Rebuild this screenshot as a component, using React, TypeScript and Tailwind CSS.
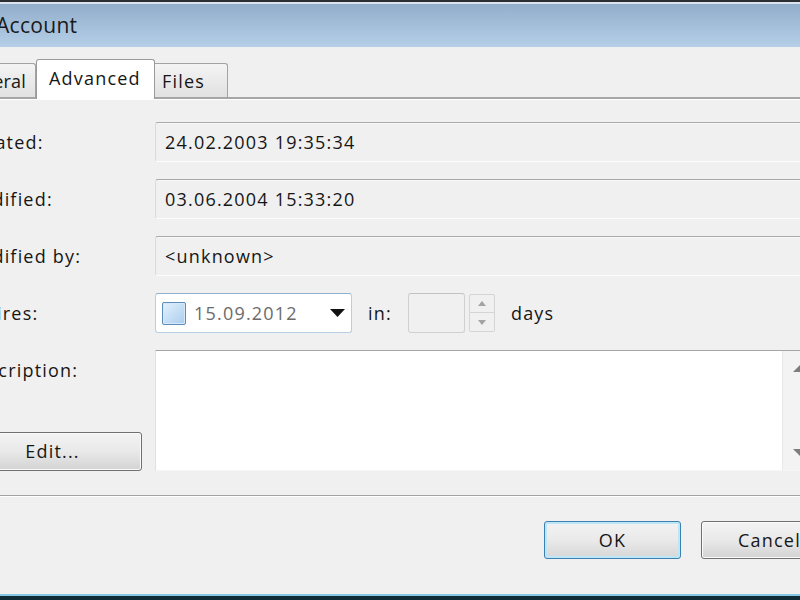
import React from "react";

function Label({ children }: { children: React.ReactNode }) {
  return <div className="w-[192px] shrink-0 h-[40px] flex items-center">{children}</div>;
}

function ReadOnly({ value }: { value: string }) {
  return (
    <div className="flex-1 h-[40px] rounded-[3px] border border-[#dadada] border-t-[#a9a9a9] border-b-[#fcfcfc] bg-[#f0f0f0] shadow-[inset_0_1px_0_#f8f8f8] flex items-center pl-[9px]">
      {value}
    </div>
  );
}

function Row({ label, children }: { label: string; children: React.ReactNode }) {
  return (
    <div className="flex h-[40px] items-center">
      <Label>{label}</Label>
      {children}
    </div>
  );
}

export default function App() {
  return (
    <div className="w-[800px] h-[600px] overflow-hidden bg-[#f0f0f0] flex flex-col font-['Open_Sans',sans-serif] text-[18px] tracking-[1.2px] text-[#161616]">
      {/* window top edge */}
      <div className="h-[2px] shrink-0 bg-[#2c3034]" />
      <div className="h-[2px] shrink-0 bg-[#dbe5ef]" />
      {/* title bar */}
      <div className="h-[43px] shrink-0 bg-gradient-to-b from-[#93aecb] to-[#b5cfe8] flex items-center">
        <span className="ml-[-4px] text-[21px] tracking-[0.3px] text-[#1a1a1a] leading-none">Account</span>
      </div>

      {/* tab strip */}
      <div className="h-[52px] shrink-0 flex items-end">
        <div className="ml-[-60px] w-[96px] h-[36px] shrink-0 border border-b-2 border-[#a3a3a3] border-b-[#a6a6a6] rounded-t-[3px] bg-gradient-to-b from-[#f4f4f4] to-[#e1e1e1] flex items-center justify-end pr-[9px] pt-[1px] tracking-[0.2px]">
          General
        </div>
        <div className="w-[119px] h-[40px] shrink-0 border border-b-0 border-[#9a9a9a] rounded-t-[3px] bg-white flex items-center pl-[12px] pb-[3px]">
          Advanced
        </div>
        <div className="w-[73px] h-[36px] shrink-0 border border-l-0 border-b-2 border-[#a3a3a3] border-b-[#a6a6a6] rounded-tr-[3px] bg-gradient-to-b from-[#f4f4f4] to-[#e1e1e1] flex items-center pl-[7px] pt-[1px]">
          Files
        </div>
        <div className="flex-1 border-b-2 border-[#a6a6a6]" />
      </div>

      {/* content */}
      <div className="shrink-0 border-t border-white ml-[-37px] mr-[-20px] pt-[22px] flex flex-col gap-[17px]">
        <Row label="Created:">
          <ReadOnly value="24.02.2003 19:35:34" />
        </Row>
        <Row label="Modified:">
          <ReadOnly value="03.06.2004 15:33:20" />
        </Row>
        <Row label="Modified by:">
          <ReadOnly value="<unknown>" />
        </Row>
        <Row label="Expires:">
          <div className="w-[197px] h-[40px] shrink-0 rounded-[3px] border border-[#b8cfe3] border-t-[#8fb0cf] bg-white flex items-center pl-[6px]">
            <div className="w-[24px] h-[23px] shrink-0 border border-[#5d8cbb] rounded-[2px] bg-gradient-to-br from-[#e4f1fc] to-[#a9cdee] shadow-[inset_0_0_0_1px_#d6e9fa]" />
            <span className="ml-[8px] text-[#6b6b6b]">15.09.2012</span>
            <svg className="ml-auto mr-[6px]" width="15" height="8" viewBox="0 0 15 8">
              <path d="M0 0 L15 0 L7.5 8 Z" fill="#111" />
            </svg>
          </div>
          <span className="ml-[16px]">in:</span>
          <div className="ml-[16px] w-[57px] h-[40px] shrink-0 rounded-[3px] border border-[#d0d0d0] border-t-[#c2c2c2] bg-[#f0f0f0]" />
          <div className="ml-[4px] w-[26px] h-[38px] shrink-0 flex flex-col">
            <div className="h-[19px] border border-[#d4d4d4] rounded-t-[2px] bg-[#f0f0f0] flex items-center justify-center">
              <svg width="8" height="5" viewBox="0 0 8 5">
                <path d="M0 5 L8 5 L4 0 Z" fill="#a3a3a3" />
              </svg>
            </div>
            <div className="h-[19px] border border-t-0 border-[#d4d4d4] rounded-b-[2px] bg-[#f0f0f0] flex items-center justify-center">
              <svg width="8" height="5" viewBox="0 0 8 5">
                <path d="M0 0 L8 0 L4 5 Z" fill="#a3a3a3" />
              </svg>
            </div>
          </div>
          <span className="ml-[16px]">days</span>
        </Row>
        <div className="flex h-[121px]">
          <div className="w-[192px] shrink-0 flex flex-col justify-between">
            <Label>Description:</Label>
            <div className="w-[179px] h-[39px] rounded-[3px] border border-[#707070] bg-gradient-to-b from-[#f3f3f3] via-[#e9e9e9] to-[#d3d3d3] shadow-[inset_0_0_0_1px_#fbfbfb] flex items-center justify-center">
              Edit...
            </div>
          </div>
          <div className="flex-1 flex border border-[#e0e0e0] border-t-[#a5a5a5] border-b-[#f6f6f6] bg-white">
            <div className="flex-1" />
            <div className="w-[34px] shrink-0 mr-[3px] bg-[#f3f3f3] border-l border-[#e9e9e9] flex flex-col justify-between items-center py-[14px]">
              <svg width="14" height="7" viewBox="0 0 14 7">
                <path d="M0 7 L14 7 L7 0 Z" fill="#7d7d7d" />
              </svg>
              <svg width="14" height="7" viewBox="0 0 14 7">
                <path d="M0 0 L14 0 L7 7 Z" fill="#7d7d7d" />
              </svg>
            </div>
          </div>
        </div>
      </div>

      {/* separator */}
      <div className="mt-[24px] shrink-0 border-t border-[#a2a2a2] border-b border-b-white h-[2px]" />

      {/* buttons */}
      <div className="mt-[24px] shrink-0 flex gap-[20px] ml-[544px]">
        <div className="w-[137px] h-[38px] shrink-0 rounded-[3px] border border-[#3c7fb1] bg-gradient-to-b from-[#f2f2f2] via-[#eaeaea] to-[#d6d6d6] shadow-[inset_0_0_0_2px_#bde6f7] flex items-center justify-center">
          OK
        </div>
        <div className="w-[137px] h-[38px] shrink-0 rounded-[3px] border border-[#707070] bg-gradient-to-b from-[#f3f3f3] via-[#e9e9e9] to-[#d3d3d3] shadow-[inset_0_0_0_1px_#fbfbfb] flex items-center justify-center">
          Cancel
        </div>
      </div>

      <div className="flex-1" />
      {/* window bottom edge */}
      <div className="h-[2px] shrink-0 bg-[#86c8e2]" />
      <div className="h-[4px] shrink-0 bg-[#0f2b37]" />
    </div>
  );
}
